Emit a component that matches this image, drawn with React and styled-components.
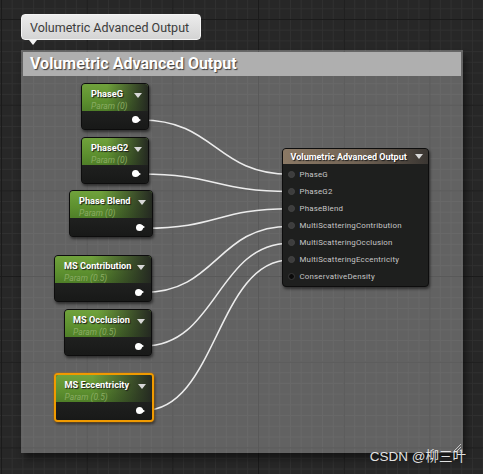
import styled, { createGlobalStyle, css } from "styled-components";

// Global reset
const GlobalStyle = createGlobalStyle`
  html, body {
    margin: 0;
    padding: 0;
    background: #272727;
  }
  body {
    font-family: Roboto, "Liberation Sans", sans-serif;
  }
`;

const GRID = 10.71;
const MAJOR = GRID * 8;

// Styled Components
const Graph = styled.div`
  width: 483px;
  height: 474px;
  position: relative;
  overflow: hidden;
  background-color: #272727;
  background-image:
    linear-gradient(to right, #1b1b1b 1px, transparent 1px),
    linear-gradient(to bottom, #1b1b1b 1px, transparent 1px),
    linear-gradient(to right, #303030 1px, transparent 1px),
    linear-gradient(to bottom, #303030 1px, transparent 1px);
  background-size:
    ${MAJOR}px ${MAJOR}px,
    ${MAJOR}px ${MAJOR}px,
    ${GRID}px ${GRID}px,
    ${GRID}px ${GRID}px;
  background-position: 1px 19px;
`;

const Tooltip = styled.div`
  position: absolute;
  left: 21px;
  top: 14px;
  width: 180px;
  height: 26px;
  box-sizing: border-box;
  display: flex;
  align-items: center;
  padding-left: 8px;
  border-radius: 4px;
  border: 1px solid #f4f4f4;
  background: linear-gradient(to bottom, #ececec, #d4d4d4);
  color: #3c3c3c;
  font-size: 12.5px;
  white-space: nowrap;
  z-index: 5;

  &::after {
    content: "";
    position: absolute;
    left: 7px;
    bottom: -6px;
    border-left: 4px solid transparent;
    border-right: 4px solid transparent;
    border-top: 5px solid #f4f4f4;
  }
`;

const CommentBox = styled.div`
  position: absolute;
  left: 21px;
  top: 50px;
  width: 442px;
  height: 403px;
  padding: 1.5px 2px 0 2px;
  box-sizing: border-box;
  background: rgba(255, 255, 255, 0.275);
  box-shadow: 3px 6px 7px rgba(0, 0, 0, 0.45);
`;

const CommentHeader = styled.div`
  height: 24px;
  background: #afafaf;
  display: flex;
  align-items: center;
  padding-left: 7px;
  color: #ffffff;
  font-weight: 700;
  font-size: 16px;
  text-shadow: 1px 1px 1px #3a3a3a;
  white-space: nowrap;
`;

const ResizeGrip = styled.svg`
  position: absolute;
  right: 1px;
  bottom: 1px;
`;

const Wires = styled.svg`
  position: absolute;
  left: 0;
  top: 0;
  z-index: 1;
`;

const Node = styled.div`
  position: absolute;
  z-index: 2;
  left: ${(p) => p.$x}px;
  top: ${(p) => p.$y}px;
  width: ${(p) => p.$w}px;
  box-sizing: border-box;
  border-radius: 4px;
  border: 1px solid #0d0d0d;
  background: #1d1e1d;
  box-shadow: 1px 2px 3px rgba(0, 0, 0, 0.55);
  overflow: hidden;
  ${(p) =>
    p.$selected &&
    css`
      border: 2px solid #f09a00;
      box-shadow: 0 0 2px #c07000, 1px 2px 3px rgba(0, 0, 0, 0.55);
    `}
`;

const ParamHeader = styled.div`
  height: 27px;
  box-sizing: border-box;
  display: flex;
  align-items: flex-start;
  justify-content: space-between;
  padding: 4px 6px 0 ${(p) => p.$pad}px;
  background:
    linear-gradient(to right, rgba(30, 30, 30, 0) 38%, rgba(34, 36, 33, 0.95) 100%),
    linear-gradient(to bottom, #70a23c 0%, #5d902f 60%, #4f7f28 100%);
`;

const TitleCol = styled.div`
  display: flex;
  flex-direction: column;
  gap: 1px;
`;

const ParamTitle = styled.div`
  color: #ffffff;
  font-weight: 700;
  font-size: 9.2px;
  line-height: 12px;
  text-shadow: 1px 1px 1px #1a1a1a;
  white-space: nowrap;
`;

const ParamValue = styled.div`
  color: #8aac62;
  font-style: italic;
  font-size: 8.5px;
  line-height: 10px;
  white-space: nowrap;
`;

const Arrow = styled.div`
  margin-top: 5px;
  width: 0;
  height: 0;
  border-left: 4px solid transparent;
  border-right: 4px solid transparent;
  border-top: 5px solid #d8d8d8;
`;

const ParamBody = styled.div`
  height: 18px;
  display: flex;
  align-items: center;
  justify-content: flex-end;
  padding-right: 7px;
  background: linear-gradient(to bottom, #1f201f, #181918);
`;

const OutPin = styled.div`
  position: relative;
  width: 7px;
  height: 7px;
  border-radius: 50%;
  background: #ffffff;
  margin-right: 2px;

  &::after {
    content: "";
    position: absolute;
    left: 6px;
    top: 1.5px;
    border-top: 2px solid transparent;
    border-bottom: 2px solid transparent;
    border-left: 3px solid #ffffff;
  }
`;

const OutputNode = styled(Node)`
  background: #1e1f1e;
`;

const OutputHeader = styled.div`
  height: 15px;
  display: flex;
  align-items: center;
  justify-content: space-between;
  padding: 0 5px 0 8px;
  background: linear-gradient(to right, #8b7965 0%, #6f6153 55%, #3a3632 100%);
  color: #ffffff;
  font-weight: 700;
  font-size: 9px;
  text-shadow: 1px 1px 1px #1a1a1a;
  white-space: nowrap;
`;

const SmallArrow = styled(Arrow)`
  margin-top: 0;
`;

const PinList = styled.div`
  padding: 1.5px 0 1px;
  display: flex;
  flex-direction: column;
`;

const PinRow = styled.div`
  height: 17px;
  display: flex;
  align-items: center;
  gap: 5px;
  padding-left: 5px;
`;

const InPin = styled.div`
  width: 7px;
  height: 7px;
  border-radius: 50%;
  box-sizing: border-box;
  background: ${(p) => (p.$linked ? "#3d3d3d" : "#0a0a0a")};
  border: 1px solid ${(p) => (p.$linked ? "#454545" : "#3a3a3a")};
`;

const PinLabel = styled.span`
  color: #c6c6c6;
  font-size: 7.9px;
  letter-spacing: 0.2px;
  white-space: nowrap;
`;

const Watermark = styled.div`
  position: absolute;
  right: 17px;
  bottom: 9px;
  z-index: 6;
  color: rgba(245, 245, 245, 0.92);
  font-family: "Liberation Sans", "Noto Sans CJK SC", sans-serif;
  font-size: 13.5px;
  white-space: nowrap;
`;

const params = [
  { title: "PhaseG", value: "Param (0)", x: 81, y: 82.5, w: 68, pad: 9 },
  { title: "PhaseG2", value: "Param (0)", x: 81, y: 136.5, w: 68, pad: 9 },
  { title: "Phase Blend", value: "Param (0)", x: 69, y: 190, w: 84, pad: 9 },
  { title: "MS Contribution", value: "Param (0.5)", x: 54, y: 255, w: 98, pad: 9 },
  { title: "MS Occlusion", value: "Param (0.5)", x: 64, y: 309, w: 88, pad: 8 },
  { title: "MS Eccentricity", value: "Param (0.5)", x: 53.5, y: 372.5, w: 100, pad: 9, selected: true },
];

const inputs = [
  { label: "PhaseG", linked: true },
  { label: "PhaseG2", linked: true },
  { label: "PhaseBlend", linked: true },
  { label: "MultiScatteringContribution", linked: true },
  { label: "MultiScatteringOcclusion", linked: true },
  { label: "MultiScatteringEccentricity", linked: true },
  { label: "ConservativeDensity", linked: false },
];

// wire ends: left output pin -> right input pin
const wires = [
  [141, 120, 290, 174.3],
  [141, 174, 290, 191.5],
  [145, 228.3, 290, 208.7],
  [143.5, 292.5, 290, 226.2],
  [144, 346, 290, 243.2],
  [143.5, 410.5, 290, 260],
];

const wirePath = ([x1, y1, x2, y2]) => {
  const d = (x2 - x1) * 0.5;
  return `M${x1},${y1} C${x1 + d},${y1} ${x2 - d},${y2} ${x2},${y2}`;
};

const App = () => {
  return (
    <>
      <GlobalStyle />
      <Graph>
        <Tooltip>Volumetric Advanced Output</Tooltip>

        <CommentBox>
          <CommentHeader>Volumetric Advanced Output</CommentHeader>
          <ResizeGrip width="9" height="9" viewBox="0 0 9 9">
            <path d="M1 8 L8 1 M4 8 L8 4 M7 8 L8 7" stroke="#d0d0d0" strokeWidth="0.9" fill="none" />
          </ResizeGrip>
        </CommentBox>

        <Wires width="483" height="474" viewBox="0 0 483 474">
          {wires.map((w, i) => (
            <path key={i} d={wirePath(w)} stroke="#ececec" strokeWidth="1.6" fill="none" />
          ))}
        </Wires>

        {params.map((p) => (
          <Node key={p.title} $x={p.x} $y={p.y} $w={p.w} $selected={p.selected}>
            <ParamHeader $pad={p.pad}>
              <TitleCol>
                <ParamTitle>{p.title}</ParamTitle>
                <ParamValue>{p.value}</ParamValue>
              </TitleCol>
              <Arrow />
            </ParamHeader>
            <ParamBody>
              <OutPin />
            </ParamBody>
          </Node>
        ))}

        <OutputNode $x={281.5} $y={148} $w={147.5}>
          <OutputHeader>
            <span>Volumetric Advanced Output</span>
            <SmallArrow />
          </OutputHeader>
          <PinList>
            {inputs.map((pin) => (
              <PinRow key={pin.label}>
                <InPin $linked={pin.linked} />
                <PinLabel>{pin.label}</PinLabel>
              </PinRow>
            ))}
          </PinList>
        </OutputNode>

        <Watermark>CSDN @柳三叶</Watermark>
      </Graph>
    </>
  );
};

export default App;
